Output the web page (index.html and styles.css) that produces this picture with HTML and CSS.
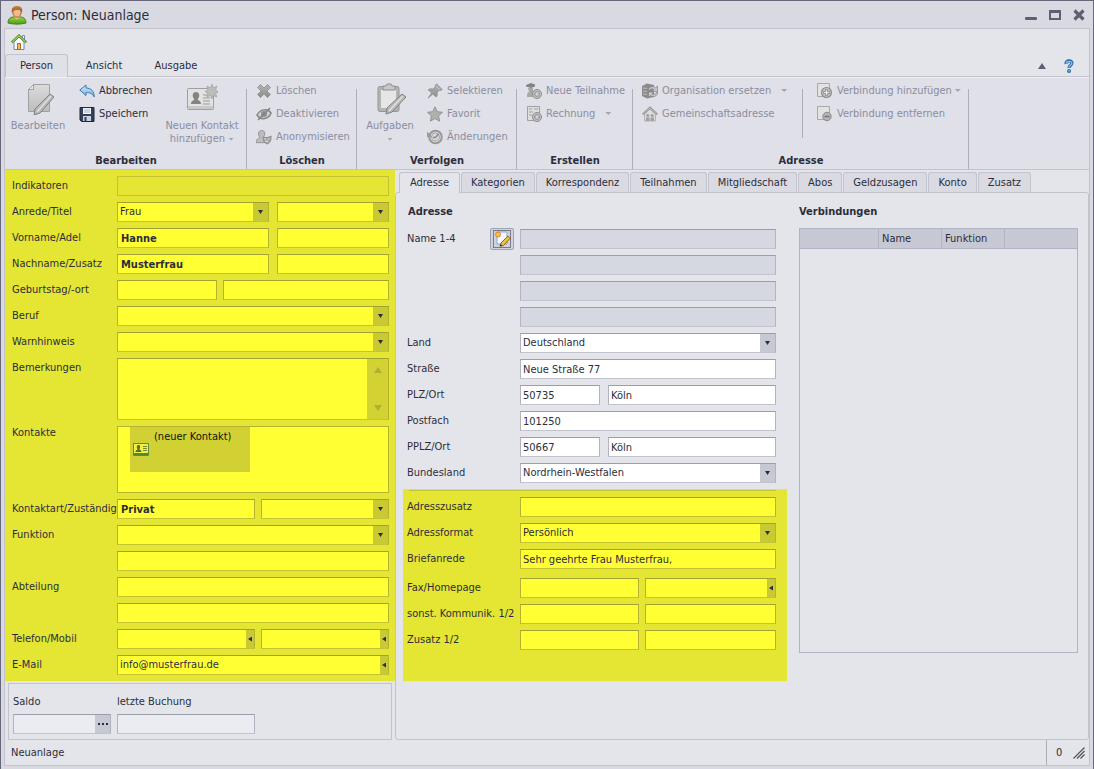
FILE: index.html
```html
<!DOCTYPE html>
<html lang="de">
<head>
<meta charset="utf-8">
<title>Person: Neuanlage</title>
<link rel="stylesheet" href="styles.css">
</head>
<body>
<svg class="defs" width="0" height="0" aria-hidden="true">
  <defs>
    <linearGradient id="gray" x1="0" y1="0" x2="0" y2="1"><stop offset="0" stop-color="#dcdcdc"/><stop offset="1" stop-color="#bcbcbc"/></linearGradient>
    <linearGradient id="mid" x1="0" y1="0" x2="0" y2="1"><stop offset="0" stop-color="#b4b4b4"/><stop offset="1" stop-color="#8c8c8c"/></linearGradient>
    <linearGradient id="blue" x1="0" y1="0" x2="0" y2="1"><stop offset="0" stop-color="#d4ecfa"/><stop offset="1" stop-color="#6aaede"/></linearGradient>
    <linearGradient id="green" x1="0" y1="0" x2="0" y2="1"><stop offset="0" stop-color="#9ad43c"/><stop offset="1" stop-color="#4c9a1c"/></linearGradient>
    <linearGradient id="hair" x1="0" y1="0" x2="0" y2="1"><stop offset="0" stop-color="#c88848"/><stop offset="1" stop-color="#8c4a1c"/></linearGradient>
    <symbol id="plus" viewBox="0 0 10 10"><circle cx="5" cy="5" r="4.500" fill="#c4c4c4" stroke="#8a8a8a"/><path d="M5 2v6M2 5h6" stroke="#808080" stroke-width="2.600"/><path d="M5 2.500v5M2.500 5h5" stroke="#e8e8e8" stroke-width="1.200"/></symbol>
  </defs>
</svg>
<div class="window">
  <header class="titlebar">
    <svg width="20" height="20" viewBox="0 0 20 20"><path d="M1 18c0-5 3-6 6-6h6c4 0 6 2 6 6-5 1.500-13 1.500-18 0z" fill="url(#green)" stroke="#3f8420"/><path d="M7 12l3 2.500 3-2.500v-2H7z" fill="#f2c398"/><ellipse cx="10" cy="7" rx="4.200" ry="5.200" fill="#f0bb8c" stroke="#a8622c"/><path d="M5 8C4 3 6 1 10 1s6 2 5 7c-1-3-2-3-4-3-3 0-5 0-6 3z" fill="url(#hair)"/></svg>
    <h1>Person: Neuanlage</h1>
    <div class="window-buttons">
      <button type="button" aria-label="Minimieren"><svg width="12" height="12" viewBox="0 0 12 12"><rect y="8" width="12" height="3" rx="1"/></svg></button>
      <button type="button" aria-label="Maximieren"><svg width="12" height="12" viewBox="0 0 12 12"><path fill-rule="evenodd" d="M0 1h12v10H0zM2 4v5h8V4z"/></svg></button>
      <button type="button" aria-label="Schließen"><svg width="12" height="12" viewBox="0 0 12 12"><path d="M1.500 1.500l9 9M10.500 1.500l-9 9" stroke="#5e6072" stroke-width="3.200"/></svg></button>
    </div>
  </header>

  <div class="frame">
    <nav class="quickbar">
      <button type="button" aria-label="Start"><svg width="16" height="16" viewBox="0 0 16 16"><path d="M11.500 1.500h2V6h-2z" fill="#fff" stroke="#7c8ca0"/><path d="M3 8v7.500h10V8L8 3z" fill="#fbfcff" stroke="#6f86b4"/><path d="M.8 8.500L8 1.600l7.200 6.900" fill="none" stroke="#4d8e20" stroke-width="2.400"/><path d="M1.200 8.200L8 1.700l6.800 6.500" fill="none" stroke="#c8ec80" stroke-width="1"/><path d="M6.500 9.500h3v6h-3z" fill="#f4b45c" stroke="#b06a20"/></svg></button>
    </nav>

    <div class="ribbon-tabs" role="tablist">
      <button type="button" role="tab" class="ribbon-tab active" aria-selected="true">Person</button>
      <button type="button" role="tab" class="ribbon-tab">Ansicht</button>
      <button type="button" role="tab" class="ribbon-tab">Ausgabe</button>
      <div class="ribbon-tools">
        <button type="button" aria-label="Menüband minimieren"><svg width="8" height="6" viewBox="0 0 8 6"><path d="M4 0l4 6H0z" fill="#5e6072"/></svg></button>
        <button type="button" aria-label="Hilfe"><svg width="10" height="14" viewBox="0 0 10 14"><path d="M2 5C1.500 1 8.200 1 8 4.200 7.900 6.300 5 6 5 9" fill="none" stroke="#2a68ac" stroke-width="3.200"/><path d="M2 4.500C2 1.600 8 1.600 7.900 4.200 7.800 6 5 6 5 8.500" fill="none" stroke="#8cc4f0" stroke-width="1.300"/><circle cx="5" cy="12" r="2" fill="#2a68ac"/><circle cx="5" cy="11.800" r="1" fill="#6cb0e8"/></svg></button>
      </div>
    </div>

    <div class="ribbon">
      <section class="group group-edit">
        <div class="group-body">
          <button type="button" class="big" disabled>
            <svg width="32" height="32" viewBox="0 0 32 32"><path d="M11.500 1.500h16v27h-21v-22z" fill="url(#gray)" stroke="#a0a0a0"/><path d="M11.500 1.500v5h-5z" fill="#ececec" stroke="#a0a0a0"/><path d="M28 11l4 3-14 16-6 2 1-6z" fill="#b8b8b8" stroke="#808080"/><path d="M29 13L15 29" stroke="#e0e0e0" stroke-width="1.500"/></svg>
            <span>Bearbeiten</span>
          </button>
          <div class="stack stack-edit">
            <button type="button" class="small"><svg width="16" height="16" viewBox="0 0 16 16"><path d="M.8 7L7 2v3c5 0 8 3 8.300 9C13.500 10.500 11 9.500 7 9.500v3z" fill="url(#blue)" stroke="#3d78b0"/></svg>Abbrechen</button>
            <button type="button" class="small"><svg width="16" height="16" viewBox="0 0 16 16"><path d="M1 1.500h14v14H2.500L1 14z" fill="#34405c" stroke="#20283c"/><path d="M4 2h8v6H4z" fill="#eef4fb"/><path d="M5 4h6M5 6h6" stroke="#a0b4cc"/><path d="M4 10h8v5H4z" fill="#c8d2e0"/><path d="M5.500 11h2v4h-2z" fill="#34405c"/></svg>Speichern</button>
          </div>
          <button type="button" class="big" disabled>
            <svg width="32" height="32" viewBox="0 0 32 32"><rect x="1.500" y="5.500" width="26" height="21" rx="1" fill="#e2e2e2" stroke="#a0a0a0"/><path d="M2 23h25v3H2z" fill="#c8c8c8"/><path d="M10 9c4 0 4 5 1.700 7 0 2 3.300 1 3.300 5H5c0-4 3.300-3 3.300-5C6 14 6 9 10 9z" fill="#848484"/><path d="M17 12h7M17 15h7M17 18h7M17 21h7" stroke="#999"/><path d="M26 1l1.500 4L31 3l-1.500 4 3 2-3 1.500L31 14l-4-1.500L26 16l-1.500-3.500L21 14l1-4-3-1.500 3-1.500L21 3l3.500 2z" fill="#bcbcbc" stroke="#989898" stroke-width=".6"/></svg>
            <span>Neuen Kontakt<br>hinzufügen <i class="caret"></i></span>
          </button>
        </div>
        <h2>Bearbeiten</h2>
      </section>

      <section class="group group-delete">
        <div class="group-body stack">
          <button type="button" class="small" disabled><svg width="16" height="16" viewBox="0 0 16 16"><path d="M4.500 1.500L8 5l3.500-3.500 3 3L11 8l3.500 3.500-3 3L8 11l-3.500 3.500-3-3L5 8 1.500 4.500z" fill="url(#mid)" stroke="#888" stroke-width=".7"/></svg>Löschen</button>
          <button type="button" class="small" disabled><svg width="16" height="16" viewBox="0 0 16 16"><path d="M1 9c3-6 11-7 14-2-2 6-10 8-14 2z" fill="#d0d0d0" stroke="#858585" stroke-width="1.500"/><circle cx="8" cy="8" r="3" fill="#8c8c8c"/><path d="M2 14L14 2" stroke="#858585" stroke-width="1.600"/></svg>Deaktivieren</button>
          <button type="button" class="small" disabled><svg width="16" height="16" viewBox="0 0 17 16"><path d="M6 1c4 0 4 5 2 7 0 2 4 1 4 6H0c0-5 4-4 4-6C2 6 2 1 6 1z" fill="#bcbcbc" stroke="#929292"/><path d="M7.500 8c3 1 5 1 8.500-1 0 5-1 7-4 8.500C9 14 7.500 12 7.500 8z" fill="#a4a4a4" stroke="#888"/><path d="M9 10h2M13 10h1.500M10 12.500q2 1 3-.5" stroke="#eee" fill="none"/></svg>Anonymisieren</button>
        </div>
        <h2>Löschen</h2>
      </section>

      <section class="group group-track">
        <div class="group-body">
          <button type="button" class="big" disabled>
            <svg width="32" height="32" viewBox="0 0 32 32"><rect x="4" y="3.500" width="21" height="25" rx="2" fill="#b4b4b4" stroke="#949494"/><path d="M7 7h15v18H7z" fill="#e6e6e6"/><path d="M9 3h3l1-2h4l1 2h3v4H9z" fill="#c8c8c8" stroke="#8e8e8e"/><path d="M28 11l4 3-14 15-6 2 1-6z" fill="#b8b8b8" stroke="#808080"/><path d="M29 13L15 28" stroke="#e0e0e0" stroke-width="1.500"/></svg>
            <span>Aufgaben<br><i class="caret"></i></span>
          </button>
          <div class="stack stack-track">
            <button type="button" class="small" disabled><svg width="16" height="16" viewBox="0 0 16 16"><path d="M9.500.8l5.700 5.700-1.700 1-1.200-.3-2.300 2.600c.5 2.200.2 3.200-1 4.200L5.800 11 1 15.200l3.700-5.300-3.500-3c1-1.200 2.500-1.200 4.200-.8L8.500 4l-.3-1.400z" fill="url(#mid)" stroke="#888" stroke-width=".7"/><path d="M9.500 3.500l3 3" stroke="#d0d0d0"/></svg>Selektieren</button>
            <button type="button" class="small" disabled><svg width="16" height="16" viewBox="0 0 16 16"><path d="M8 .8l2.200 4.900 5.300.6-4 3.600 1.200 5.300L8 12.500l-4.700 2.700 1.200-5.300-4-3.600 5.300-.6z" fill="#b0b0b0" stroke="#949494"/></svg>Favorit</button>
            <button type="button" class="small" disabled><svg width="16" height="16" viewBox="0 0 16 16"><circle cx="8.500" cy="8" r="6.300" fill="#dadada" stroke="#989898" stroke-width="2"/><circle cx="8.500" cy="8" r="4" fill="none" stroke="#a8a8a8"/><path d="M11.500 5L8.500 8.500H6" fill="none" stroke="#888" stroke-width="1.400"/><path d="M0 2.500V8h5.500z" fill="#9c9c9c"/></svg>Änderungen</button>
          </div>
        </div>
        <h2>Verfolgen</h2>
      </section>

      <section class="group group-create">
        <div class="group-body stack">
          <button type="button" class="small" disabled><svg width="16" height="16" viewBox="0 0 16 16"><path d="M0 2l5-2 4 1.500v2L5 5 0 3.500z" fill="#848484"/><path d="M2 5h5v3l3 2v4H1c0-3 0-4 2-5z" fill="#a8a8a8"/><use href="#plus" x="6" y="6" width="10" height="10"/></svg>Neue Teilnahme</button>
          <button type="button" class="small" disabled><svg width="16" height="16" viewBox="0 0 16 16"><path d="M1.500.5h12v14h-12z" fill="#dedede" stroke="#a0a0a0"/><path d="M3 3h3M3 6h4M3 9h3M8 3h4" stroke="#a0a0a0"/><use href="#plus" x="6" y="6" width="10" height="10"/></svg>Rechnung<i class="caret caret-far"></i></button>
        </div>
        <h2>Erstellen</h2>
      </section>

      <section class="group group-address">
        <div class="group-body">
          <div class="stack stack-split">
            <button type="button" class="small" disabled><svg width="16" height="16" viewBox="0 0 16 16"><path d="M0 3l5-2.500L12 2v12l-7 1.500L0 13z" fill="#8c8c8c"/><path d="M1 5l4 .500M1 8l4 .500M1 11l4 .500" stroke="#b8b8b8"/><path d="M6 7c1-3.500 5-4.500 7.500-2.200L15.500 3v5.500H10l2-2c-2-1-3.500-.8-4.500.8zM16 9.500c-1 4.200-5.200 5-7.500 3L6.500 14.500V9h5.300l-1.800 2c2 1 3.500.3 4.500-1.500z" fill="#c8c8c8" stroke="#808080" stroke-width=".7"/></svg>Organisation ersetzen<i class="caret caret-far"></i></button>
            <button type="button" class="small" disabled><svg width="16" height="16" viewBox="0 0 16 16"><path d="M2.500 8v7h11V8L8 3z" fill="#dcdcdc" stroke="#b4b4b4"/><path d="M.8 8.500L8 1.800l7.200 6.700" fill="none" stroke="#949494" stroke-width="2.200"/><path d="M1.500 8L8 2l6.500 6" fill="none" stroke="#d0d0d0" stroke-width=".7"/><circle cx="5.800" cy="9.500" r="1.600" fill="#a0a0a0"/><circle cx="10.200" cy="9.500" r="1.600" fill="#a0a0a0"/><path d="M4 15v-3.500h3.500V15zM8.500 15v-3.500H12V15z" fill="#a0a0a0"/></svg>Gemeinschaftsadresse</button>
          </div>
          <div class="stack stack-links">
            <button type="button" class="small" disabled><svg width="16" height="16" viewBox="0 0 16 16"><path d="M.5.5h12v13H.5z" fill="#e2e2e2" stroke="#a8a8a8"/><use href="#plus" x="4" y="4" width="11" height="11"/></svg>Verbindung hinzufügen<i class="caret"></i></button>
            <button type="button" class="small" disabled><svg width="16" height="16" viewBox="0 0 16 16"><path d="M.5.5h12v13H.5z" fill="#e2e2e2" stroke="#a8a8a8"/><circle cx="10" cy="10.500" r="4.200" fill="#b4b4b4" stroke="#8a8a8a"/><path d="M7.500 10.500h5" stroke="#777" stroke-width="1.600"/></svg>Verbindung entfernen</button>
          </div>
        </div>
        <h2>Adresse</h2>
      </section>
    </div>

    <main class="content">
      <div class="left">
        <form class="person marked">
          <label for="indikatoren">Indikatoren</label>
          <div class="cells"><input id="indikatoren" class="field flat" readonly></div>

          <label for="anrede">Anrede/Titel</label>
          <div class="cells name-cells">
            <div class="combo"><select id="anrede"><option>Frau</option></select></div>
            <div class="combo"><select aria-label="Titel"><option></option></select></div>
          </div>

          <label for="vorname">Vorname/Adel</label>
          <div class="cells name-cells"><input id="vorname" class="field strong" value="Hanne"><input class="field" aria-label="Adel"></div>

          <label for="nachname">Nachname/Zusatz</label>
          <div class="cells name-cells"><input id="nachname" class="field strong" value="Musterfrau"><input class="field" aria-label="Zusatz"></div>

          <label for="geburtstag">Geburtstag/-ort</label>
          <div class="cells birth-cells"><input id="geburtstag" class="field"><input class="field" aria-label="Geburtsort"></div>

          <label for="beruf">Beruf</label>
          <div class="cells"><div class="combo"><select id="beruf"><option></option></select></div></div>

          <label for="warnhinweis">Warnhinweis</label>
          <div class="cells"><div class="combo"><select id="warnhinweis"><option></option></select></div></div>

          <label for="bemerkungen">Bemerkungen</label>
          <div class="notes">
            <textarea id="bemerkungen"></textarea>
            <div class="scroller"><svg width="8" height="6" viewBox="0 0 8 6"><path d="M4 0l4 6H0z"/></svg><svg width="8" height="6" viewBox="0 0 8 6"><path d="M4 6l4-6H0z"/></svg></div>
          </div>

          <span class="label">Kontakte</span>
          <div class="contacts">
            <button type="button" class="contact">
              <svg width="16" height="13" viewBox="0 0 16 13"><path d="M.5.5h15v12H.5z" fill="#f0f23c" stroke="#5e8c3c"/><path d="M1 10h14v2H1z" fill="#4c8c3c"/><path d="M5.500 2c2 0 2 2.500 1 4 0 1.500 2 .5 2 3h-6c0-2.500 2-1.500 2-3-1-1.500-1-4 1-4z" fill="#5a6a34"/><path d="M10 3.500h4M10 5.500h4M10 7.500h4" stroke="#7c8430"/></svg>
              <span>(neuer Kontakt)</span>
            </button>
          </div>

          <label for="kontaktart">Kontaktart/Zuständig</label>
          <div class="cells half-cells"><input id="kontaktart" class="field strong" value="Privat"><div class="combo"><select aria-label="Zuständig"><option></option></select></div></div>

          <label for="funktion">Funktion</label>
          <div class="cells"><div class="combo"><select id="funktion"><option></option></select></div></div>
          <span></span>
          <div class="cells"><input class="field" aria-label="Funktion 2"></div>

          <label for="abteilung">Abteilung</label>
          <div class="cells"><input id="abteilung" class="field"></div>
          <span></span>
          <div class="cells"><input class="field" aria-label="Abteilung 2"></div>

          <label for="telefon">Telefon/Mobil</label>
          <div class="cells half-cells">
            <div class="dial"><input id="telefon"><button type="button" aria-label="Telefon wählen"></button></div>
            <div class="dial"><input aria-label="Mobil"><button type="button" aria-label="Mobil wählen"></button></div>
          </div>

          <label for="email">E-Mail</label>
          <div class="cells"><div class="dial"><input id="email" value="info@musterfrau.de"><button type="button" aria-label="E-Mail schreiben"></button></div></div>
        </form>

        <section class="balance">
          <label for="saldo">Saldo</label>
          <label for="buchung">letzte Buchung</label>
          <div class="lookup"><input id="saldo" readonly><button type="button" aria-label="Saldo anzeigen"><svg width="10" height="2" viewBox="0 0 10 2"><path d="M0 0h2v2H0zM4 0h2v2H4zM8 0h2v2H8z" fill="#2c2c3c"/></svg></button></div>
          <input id="buchung" class="field" readonly>
        </section>
      </div>

      <div class="right">
        <div class="tabs" role="tablist">
          <button type="button" role="tab" class="tab active" aria-selected="true">Adresse</button>
          <button type="button" role="tab" class="tab">Kategorien</button>
          <button type="button" role="tab" class="tab">Korrespondenz</button>
          <button type="button" role="tab" class="tab">Teilnahmen</button>
          <button type="button" role="tab" class="tab">Mitgliedschaft</button>
          <button type="button" role="tab" class="tab">Abos</button>
          <button type="button" role="tab" class="tab">Geldzusagen</button>
          <button type="button" role="tab" class="tab">Konto</button>
          <button type="button" role="tab" class="tab">Zusatz</button>
        </div>
        <div class="panel">
          <form class="address">
            <h3>Adresse</h3>
            <div class="address-grid">
              <label for="name1">Name 1-4</label>
              <div class="cells edit-cells">
                <button type="button" class="edit" aria-label="Name bearbeiten"><svg width="18" height="18" viewBox="0 0 18 18"><path d="M4 2h10v12H4z" fill="#f4f8ff" stroke="#8ca4cc"/><circle cx="5" cy="4.500" r="2.500" fill="#f8c060" stroke="#dc8828"/><path d="M15 6l2 2.500-6.500 7L7.500 16l.5-3z" fill="#f0c040" stroke="#94641c"/><path d="M6.500 16.500l3-.5-2-2z" fill="#30343c"/><rect x=".5" y=".5" width="17" height="17" fill="none" stroke="#20202c" stroke-dasharray="1 1"/></svg></button>
                <input id="name1" class="field locked" readonly>
              </div>
              <span></span><div class="cells"><input class="field locked" aria-label="Name 2" readonly></div>
              <span></span><div class="cells"><input class="field locked" aria-label="Name 3" readonly></div>
              <span></span><div class="cells"><input class="field locked" aria-label="Name 4" readonly></div>
              <label for="land">Land</label>
              <div class="cells"><div class="combo"><select id="land"><option>Deutschland</option></select></div></div>
              <label for="strasse">Straße</label>
              <div class="cells"><input id="strasse" class="field" value="Neue Straße 77"></div>
              <label for="plz">PLZ/Ort</label>
              <div class="cells zip-cells"><input id="plz" class="field" value="50735"><input class="field" aria-label="Ort" value="Köln"></div>
              <label for="postfach">Postfach</label>
              <div class="cells"><input id="postfach" class="field" value="101250"></div>
              <label for="pplz">PPLZ/Ort</label>
              <div class="cells zip-cells"><input id="pplz" class="field" value="50667"><input class="field" aria-label="Postfach-Ort" value="Köln"></div>
              <label for="bundesland">Bundesland</label>
              <div class="cells"><div class="combo"><select id="bundesland"><option>Nordrhein-Westfalen</option></select></div></div>
            </div>
            <div class="extra marked">
              <hr>
              <div class="address-grid">
                <label for="adresszusatz">Adresszusatz</label>
                <div class="cells"><input id="adresszusatz" class="field"></div>
                <label for="adressformat">Adressformat</label>
                <div class="cells"><div class="combo"><select id="adressformat"><option>Persönlich</option></select></div></div>
                <label for="briefanrede">Briefanrede</label>
                <div class="cells"><input id="briefanrede" class="field" value="Sehr geehrte Frau Musterfrau,"></div>
              </div>
              <div class="address-grid">
                <label for="fax">Fax/Homepage</label>
                <div class="cells pair-cells"><input id="fax" class="field"><div class="dial"><input aria-label="Homepage"><button type="button" aria-label="Homepage öffnen"></button></div></div>
                <label for="sonst">sonst. Kommunik. 1/2</label>
                <div class="cells pair-cells"><input id="sonst" class="field"><input class="field" aria-label="sonst. Kommunikation 2"></div>
                <label for="zusatz1">Zusatz 1/2</label>
                <div class="cells pair-cells"><input id="zusatz1" class="field"><input class="field" aria-label="Zusatz 2"></div>
              </div>
            </div>
          </form>

          <section class="links">
            <h3>Verbindungen</h3>
            <div class="links-box">
              <table>
                <thead><tr><th class="col-icon"></th><th class="col-name">Name</th><th class="col-name">Funktion</th><th></th></tr></thead>
                <tbody></tbody>
              </table>
            </div>
          </section>
        </div>
      </div>
    </main>

    <footer class="status">
      <span>Neuanlage</span>
      <span class="count">0</span>
      <svg width="12" height="12" viewBox="0 0 12 12"><path d="M.5 11.500l11-11M4 11.500L11.500 4M7.500 11.500l4-4" stroke="#50525e" stroke-width="1.200"/></svg>
    </footer>
  </div>
</div>
</body>
</html>
```

FILE: styles.css
```css
:root {
  --text: #2c2d3b;
  --muted: #8c8d9f;
  --line: #c2c3cd;
  --surface: #e4e5ea;
  --edge-top: #9c9dac;
  --edge-side: #b2b3c0;
  --edge-bottom: #c2c3cd;
  --paper: #ffffff;
  --knob: #c6c8d3;
}

* { box-sizing: border-box; }

body {
  margin: 0;
  color: var(--text);
  font: 11px/14px "DejaVu Sans Condensed", "DejaVu Sans", sans-serif;
}

button, input, select, textarea {
  margin: 0;
  padding: 0;
  border: 0;
  border-radius: 0;
  background: none;
  color: inherit;
  font: inherit;
}

h1, h2, h3 { margin: 0; font-size: 11px; }
svg { display: block; flex: none; }
.defs { position: absolute; }

.window {
  display: flex;
  flex-direction: column;
  min-height: 100vh;
  padding: 0 3px 3px;
  border: 1px solid #66677b;
  background: #d9dae1;
}

.titlebar {
  display: flex;
  align-items: center;
  gap: 4px;
  height: 27px;
  padding: 0 5px 0 3px;
}
.titlebar h1 { flex: 1; font-size: 14px; font-weight: normal; line-height: 20px; }
.window-buttons { display: flex; gap: 12px; }
.window-buttons svg { fill: #5e6072; }

.frame {
  display: flex;
  flex: 1;
  flex-direction: column;
  border: 1px solid var(--line);
  background: var(--surface);
}

.quickbar { display: flex; align-items: center; height: 25px; padding-left: 6px; }

/* Ribbon */
.ribbon-tabs { display: flex; height: 23px; margin-bottom: -1px; }
.ribbon-tab { min-width: 72px; }
.ribbon-tab.active {
  z-index: 1;
  min-width: 63px;
  border: 1px solid var(--line);
  border-bottom: 0;
  border-radius: 3px 3px 0 0;
  background: #dfe0e8;
}
.ribbon-tools { display: flex; align-items: center; gap: 18px; margin-left: auto; padding-right: 15px; }

.ribbon {
  display: flex;
  padding-top: 2px;
  border-top: 1px solid var(--line);
  border-bottom: 1px solid var(--line);
  background: #dfe0e8;
  box-shadow: inset 0 1px #f0f1f5;
}
.group {
  display: flex;
  flex-direction: column;
  background: linear-gradient(#adaeb8, #adaeb8) right bottom / 1px calc(100% - 10px) no-repeat;
}
.group h2 { padding: 6px 0 1px; text-align: center; }
.group-body { display: flex; height: 69px; }
.group-edit { width: 242px; }
.group-delete { width: 110px; }
.group-track { width: 160px; }
.group-create { width: 116px; }
.group-address { width: 336px; }
.group-delete .stack, .group-create .stack { padding-left: 9px; }

.stack { display: flex; flex-direction: column; padding-left: 9px; }
.stack-edit { width: 86px; padding-left: 8px; }
.stack-track { padding-left: 4px; }
.stack-split {
  width: 170px;
  background: linear-gradient(#adaeb8, #adaeb8) right 10px / 1px 49px no-repeat;
}
.stack-links { padding-left: 14px; }

.small { display: flex; align-items: center; gap: 4px; height: 23px; white-space: nowrap; }
.small:disabled, .big:disabled { color: var(--muted); }
.big {
  display: flex;
  flex-direction: column;
  align-items: center;
  gap: 4px;
  min-width: 66px;
  padding-top: 4px;
  line-height: 13px;
}
.stack + .big { flex: 1; }
.caret {
  display: inline-block;
  width: 6px;
  height: 3px;
  background: #a4a5b2;
  clip-path: polygon(0 0, 100% 0, 50% 100%);
  vertical-align: middle;
}
.small .caret { margin-left: -1px; }
.small .caret-far { margin-left: 6px; }

/* Shared form parts */
.marked {
  --edge-top: #a2a22e;
  --edge-side: #b4b430;
  --edge-bottom: #c4c432;
  --paper: #ffff33;
  --knob: #c9c933;
  background: #e5e533;
}
label, .label { white-space: nowrap; }
.cells { display: grid; gap: 8px; min-width: 0; }
.name-cells { grid-template-columns: 152fr 112fr; }
.birth-cells { grid-template-columns: 100px 1fr; gap: 6px; }
.half-cells { grid-template-columns: 138px 1fr; gap: 6px; }
.zip-cells { grid-template-columns: 80px 1fr; }
.pair-cells { grid-template-columns: 119px 1fr; gap: 6px; }

.field, .combo, .dial, .lookup, .notes {
  min-width: 0;
  height: 20px;
  border: 1px solid var(--edge-side);
  border-top-color: var(--edge-top);
  border-bottom-color: var(--edge-bottom);
  background: var(--paper);
}
.field, .dial input, .combo select { padding: 0 2px; }
.field { width: 100%; }
.strong { padding: 0 3px; font-weight: bold; }
.flat { border-color: var(--edge-bottom); background: none; }
.locked { background: #d5d8e0; }

.combo { position: relative; display: flex; }
.combo select { flex: 1; width: 100%; padding-right: 16px; appearance: none; }
.combo::before, .combo::after { position: absolute; right: 0; content: ""; pointer-events: none; }
.combo::before { top: 0; bottom: 0; width: 15px; background: var(--knob); }
.combo::after {
  top: 7px;
  right: 5px;
  width: 5px;
  height: 4px;
  background: var(--text);
  clip-path: polygon(0 0, 100% 0, 50% 100%);
}

.dial, .lookup, .notes { display: flex; }
.dial input, .lookup input { flex: 1; width: 0; }
.dial button { display: grid; place-items: center; width: 8px; background: var(--knob); }
.dial button::after {
  width: 4px;
  height: 5px;
  background: var(--text);
  clip-path: polygon(100% 0, 100% 100%, 0 50%);
  content: "";
}
.lookup button { display: grid; place-items: center; width: 15px; background: var(--knob); }

/* Person column */
.content { display: flex; flex: 1; }
.left { display: flex; flex: 0 0 390px; flex-direction: column; }
.person {
  display: grid;
  grid-template-columns: 105px 1fr;
  row-gap: 6px;
  padding: 6px 6px 6px 7px;
}
.person label { padding-top: 3px; }
.notes { height: 62px; }
.notes textarea { flex: 1; width: 0; resize: none; }
.scroller {
  display: flex;
  flex-direction: column;
  align-items: center;
  justify-content: space-between;
  width: 21px;
  padding: 8px 0;
  background: #d2d233;
  fill: #b0b032;
}
.contacts { height: 67px; padding-left: 12px; border: 1px solid var(--edge-side); background: var(--paper); }
.contact {
  display: flex;
  align-items: center;
  gap: 5px;
  width: 120px;
  height: 45px;
  padding-left: 3px;
  background: #d1d133;
  color: #111;
}
.contact span { align-self: flex-start; padding-top: 3px; }

.balance {
  --paper: #ebecf2;
  display: grid;
  grid-template-columns: 98px 138px;
  gap: 5px 6px;
  margin: 2px 3px 0;
  padding: 11px 4px 5px;
  border: 1px solid var(--line);
}

/* Address column */
.right { display: flex; flex: 1; flex-direction: column; min-width: 0; padding-top: 2px; }
.tabs { display: flex; gap: 1px; height: 20px; padding-left: 4px; }
.tab {
  padding: 0 9px;
  border: 1px solid var(--line);
  border-bottom: 0;
  border-radius: 3px 3px 0 0;
  background: #d9dae2;
}
.tab.active { z-index: 1; min-width: 61px; margin-bottom: -1px; background: var(--surface); }
.panel {
  display: flex;
  flex: 1;
  gap: 12px;
  padding: 12px 10px 0 7px;
  border: 1px solid var(--line);
  border-radius: 3px;
}
.address { flex: 0 0 384px; }
.address h3 { padding-left: 5px; }
.address-grid {
  display: grid;
  grid-template-columns: 113px 1fr;
  row-gap: 6px;
  padding: 0 11px 0 4px;
}
.address-grid label { padding-top: 3px; }
.address h3 + .address-grid { padding-top: 10px; }
.edit-cells { grid-template-columns: 24px 1fr; gap: 6px; margin-left: -30px; }
.edit {
  display: grid;
  place-items: center;
  height: 22px;
  margin: -1px 0;
  border: 1px solid #9ea4b4;
  border-radius: 2px;
  background: #cfd3de;
}
.extra { display: flex; flex-direction: column; gap: 9px; margin-top: 6px; padding-bottom: 31px; }
.extra hr { height: 1px; margin: 1px 11px -3px 6px; border: 0; background: #c4c432; }

.links { display: flex; flex: 1; flex-direction: column; min-width: 0; }
.links-box { height: 425px; margin-top: 9px; border: 1px solid #b2b4c4; }
.links table { width: 100%; border-collapse: separate; border-spacing: 0; table-layout: fixed; }
.links th {
  height: 20px;
  padding: 0 3px;
  border-right: 1px solid #b2b4c4;
  border-bottom: 1px solid #b2b4c4;
  background: #c6c9d4;
  font-weight: normal;
  text-align: left;
}
.links th:last-child { border-right: 0; }
.col-icon { width: 79px; }
.col-name { width: 63px; }

.status { display: flex; align-items: center; height: 25px; padding: 0 4px 0 6px; }
.count {
  display: flex;
  align-items: center;
  align-self: stretch;
  width: 27px;
  margin-left: auto;
  padding-left: 9px;
  border-left: 1px solid #adaeb8;
}
```
